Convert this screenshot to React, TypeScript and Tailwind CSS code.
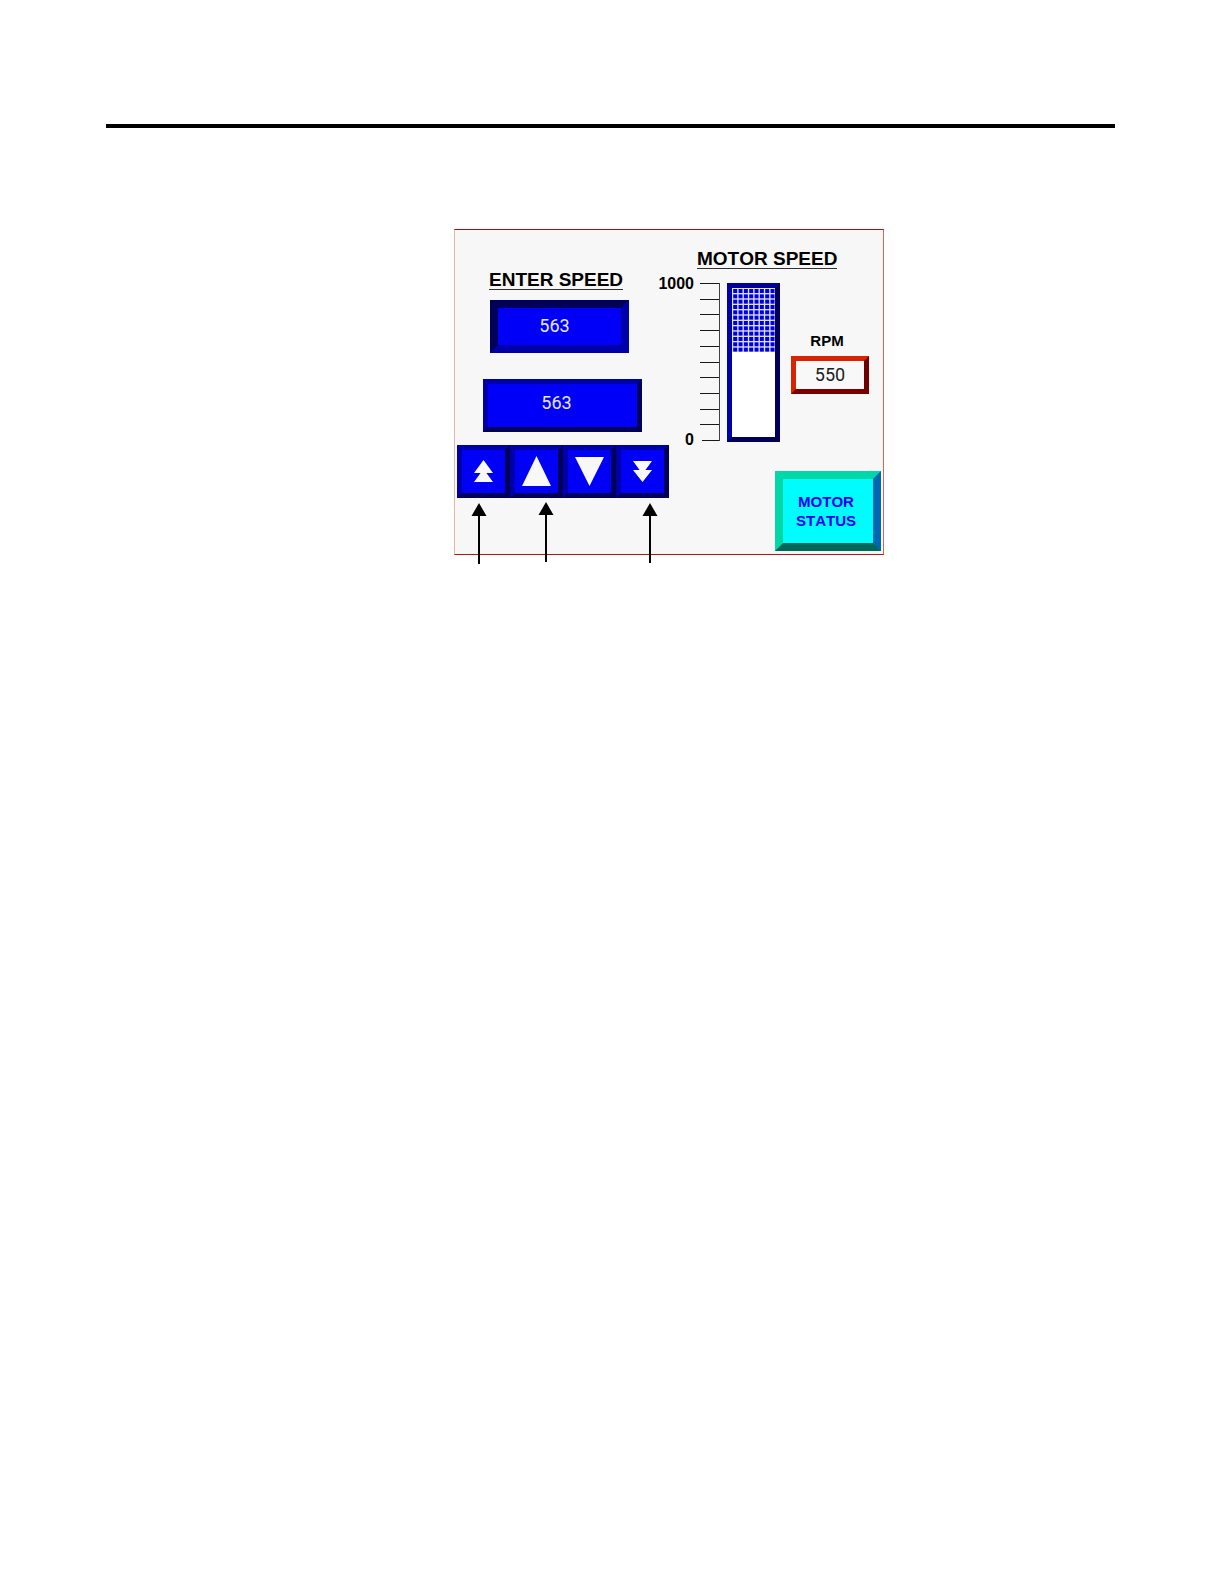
import { useState } from 'react'

const SCALE_MAX = 1000
const TICKS = [0, 1, 2, 3, 4, 5, 6, 7, 8, 9, 10]
const MESH_ROWS = [0, 1, 2, 3, 4, 5, 6, 7, 8, 9, 10, 11]
const MESH_COLS = [0, 1, 2, 3, 4, 5, 6, 7]

const digits = "font-['Roboto',sans-serif] text-[18px]"
const heading = 'w-fit border-b border-[#303030] text-[19px] leading-[18px] font-bold whitespace-nowrap'

const keys = [
  { label: 'Increase fast', step: 10, shape: 'M21.5 10L31 23H12Z M21.5 19L31 32H12Z' },
  { label: 'Increase', step: 1, shape: 'M21.5 6L36 36H7Z' },
  { label: 'Decrease', step: -1, shape: 'M7 7H36L21.5 36Z' },
  { label: 'Decrease fast', step: -10, shape: 'M12 11H31L21.5 24Z M12 20H31L21.5 32Z' },
]

function Pointer({ className, length }: { className: string; length: number }) {
  return (
    <svg className={`absolute ${className}`} width="16" height={length} aria-hidden="true">
      <path d="M8 0L15.5 13H0.5Z" fill="#000" />
      <rect x="7" y="10" width="2" height={length - 10} fill="#000" />
    </svg>
  )
}

function Scale() {
  return (
    <svg width="21" height="159" viewBox="0 0 21 159" aria-hidden="true" shapeRendering="crispEdges">
      {TICKS.map((t) => (
        <rect key={t} x={t === 10 ? 2 : 0} y={Math.round(t * 15.7)} width={t === 10 ? 18 : 20} height="1" fill="#181818" />
      ))}
      <rect x="19" y="0" width="1" height="158" fill="#404040" />
    </svg>
  )
}

function BarGraph({ value }: { value: number }) {
  return (
    <div
      role="meter"
      aria-label="Motor speed"
      aria-valuemin={0}
      aria-valuemax={SCALE_MAX}
      aria-valuenow={value}
      className="h-[159px] w-[53px] border-[5px] border-t-[#000098] border-r-[#000058] border-b-[#000058] border-l-[#0000a8] bg-white"
    >
      <svg width="43" height="65" aria-hidden="true">
        <rect width="43" height="64" fill="#e0e0ff" />
        {MESH_ROWS.map((r) =>
          MESH_COLS.map((c) => (
            <rect key={`${r}-${c}`} x={1.2 + c * 5.33} y={1 + r * 5.33} width="4" height="4" fill="#0000d8" />
          ))
        )}
      </svg>
    </div>
  )
}

export default function App() {
  const [speed, setSpeed] = useState(563)
  const rpm = 550

  const step = (n: number) => setSpeed((s) => Math.min(SCALE_MAX, Math.max(0, s + n)))

  return (
    <main className="min-h-screen bg-white pt-[124px] font-['Liberation_Sans',Arial,sans-serif] text-black [font-kerning:none]">
      <hr className="mr-[109px] ml-[106px] border-t-4 border-black" />

      <section className="relative mt-[101px] ml-[454px] flex h-[326px] max-w-[430px] border border-t-[#a80c1c] border-r-[#d06858] border-b-[#b01414] border-l-[#e0b8a0] bg-[#f7f7f7]">
        {/* Speed entry */}
        <div className="ml-0.5 w-[200px] shrink-0 pt-[41px]">
          <label htmlFor="speed" className={`ml-8 block ${heading}`}>
            ENTER SPEED
          </label>
          <input
            id="speed"
            inputMode="numeric"
            value={speed}
            onChange={(e) => setSpeed(Number(e.target.value) || 0)}
            className={`mt-2.5 ml-[33px] block h-[53px] w-[139px] border-8 border-t-[#000058] border-r-[#0000a8] border-b-[#0000a8] border-l-[#000058] bg-[#0000f8] pr-2.5 pb-0.5 text-center text-[#e8e8ff] ${digits}`}
          />
          <input
            aria-label="Ramped speed"
            inputMode="numeric"
            value={speed}
            onChange={(e) => setSpeed(Number(e.target.value) || 0)}
            className={`mt-[26px] ml-[26px] block h-[53px] w-[159px] border-[5px] border-t-[#0000a8] border-r-[#000058] border-b-[#000058] border-l-[#0000a8] bg-[#0000f8] pr-3 pb-1.5 text-center text-[#e8e8ff] ${digits}`}
          />
          <div className="mt-[13px] flex w-[212px]">
            {keys.map((k) => (
              <button
                key={k.label}
                type="button"
                aria-label={k.label}
                onClick={() => step(k.step)}
                className="size-[53px] border-[5px] border-t-[#0000a8] border-r-[#000058] border-b-[#000058] border-l-[#0000a8] bg-[#0000f8]"
              >
                <svg width="43" height="43" viewBox="0 0 43 43" aria-hidden="true">
                  <path d={k.shape} fill="#f8f8f8" />
                </svg>
              </button>
            ))}
          </div>
        </div>

        {/* Motor speed */}
        <div className="flex min-w-0 flex-1 flex-col pt-5 pr-0.5 pb-[3px]">
          <h2 className={`ml-10 ${heading}`}>MOTOR SPEED</h2>
          <div className="mt-3.5 flex">
            <div className="-mt-[7px] -mb-1.5 flex w-[37px] flex-col justify-between text-right text-[16px] leading-4 font-bold">
              <span>1000</span>
              <span>0</span>
            </div>
            <div className="ml-1.5">
              <Scale />
            </div>
            <div className="ml-1.5">
              <BarGraph value={rpm} />
            </div>
            <div className="ml-[11px] flex w-[78px] flex-col pt-[50px]">
              <label htmlFor="rpm" className="pr-1.5 text-center text-[15px] leading-4 font-bold">
                RPM
              </label>
              <output
                id="rpm"
                className={`mt-[7px] flex h-[38px] items-center justify-center border-[5px] border-t-[#d82400] border-r-[#700000] border-b-[#780000] border-l-[#d82400] bg-[#f8f8f8] leading-none text-[#202020] ${digits}`}
              >
                {rpm}
              </output>
            </div>
          </div>
          <button
            type="button"
            className="mt-auto h-20 w-[106px] self-end border-8 border-t-[#00d8a8] border-r-[#0068b0] border-b-[#006858] border-l-[#00d8a8] bg-[#00fcfc] pr-1 text-[15px] leading-[19px] font-bold text-[#0000f0]"
          >
            MOTOR
            <br />
            STATUS
          </button>
        </div>

        {/* Callout arrows */}
        <Pointer className="top-[273px] left-4" length={61} />
        <Pointer className="top-[272px] left-[83px]" length={60} />
        <Pointer className="top-[273px] left-[187px]" length={60} />
      </section>
    </main>
  )
}
